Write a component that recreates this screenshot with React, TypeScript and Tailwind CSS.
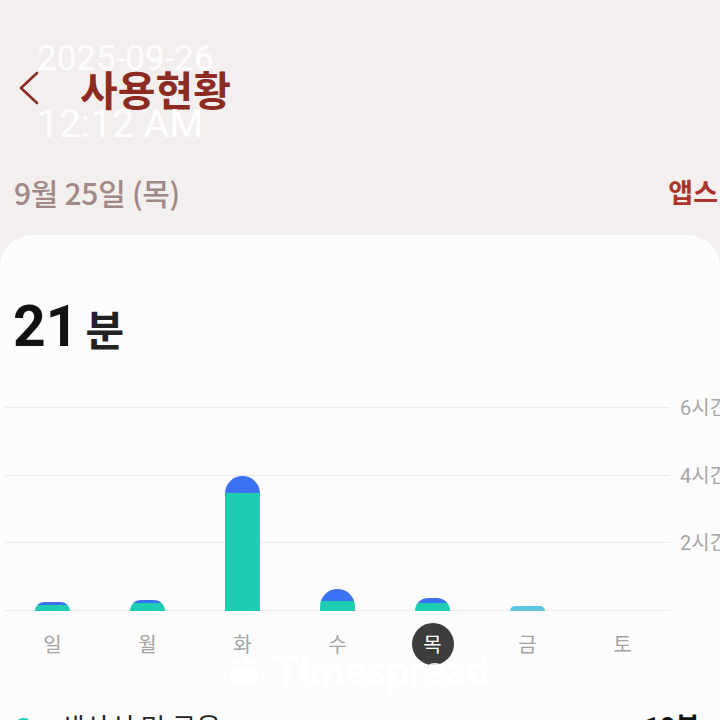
import React from 'react';

const bars = [
  { day: '일', blue: 3, teal: 6 },
  { day: '월', blue: 3, teal: 8 },
  { day: '화', blue: 17, teal: 118 },
  { day: '수', blue: 12, teal: 10 },
  { day: '목', blue: 5, teal: 8, selected: true },
  { day: '금', blue: 0, teal: 5, faint: true },
  { day: '토', blue: 0, teal: 0 },
];

const gridLabels = ['6시간', '4시간', '2시간', ''];

const kr = { fontFamily: '"Noto Sans CJK KR", "Noto Sans", sans-serif' };
const num = { fontFamily: 'Roboto, "Noto Sans CJK KR", sans-serif' };

export default function App() {
  return (
    <div className="relative w-[720px] h-[720px] overflow-hidden bg-[#f3efee]" style={kr}>
      {/* header */}
      <div className="flex items-center pl-[18px] pt-[64px] h-[112px]">
        <svg width="22" height="34" viewBox="0 0 22 34" fill="none">
          <path d="M19 2 L3 17 L19 32" stroke="#8c2b22" strokeWidth="2.6" strokeLinecap="round" strokeLinejoin="round" />
        </svg>
        <h1 className="ml-[40px] text-[41px] font-bold leading-none text-[#8c2b22]">사용현황</h1>
      </div>

      <div className="flex items-center justify-between pl-[14px] mt-[60px] h-[40px] whitespace-nowrap">
        <span className="text-[30px] font-medium text-[#a08886] tracking-[-0.3px]">9월 25일 (목)</span>
        <span className="text-[27px] font-bold text-[#a9352c] mr-[2px]">앱스</span>
      </div>

      {/* card */}
      <div className="mt-[23px] rounded-t-[32px] bg-[#fcfcfc] h-[600px]">
        <div className="flex items-baseline pl-[13px] pt-[63px]">
          <span className="text-[57px] font-bold leading-none text-[#111]" style={num}>21</span>
          <span className="ml-[7px] text-[42px] font-bold leading-none text-[#222]" style={kr}>분</span>
        </div>

        {/* chart */}
        <div className="relative mt-[52px] h-[204px] flex flex-col justify-between">
          {gridLabels.map((label, i) => (
            <div key={i} className="flex items-center h-px">
              <div className="ml-[5px] w-[665px] shrink-0 h-px bg-[#ebebeb]" />
              <span className="ml-[10px] shrink-0 text-[20px] leading-none text-[#a6a6a6] whitespace-nowrap" style={num}>
                {label.slice(0, 1)}
                <span style={kr}>{label.slice(1)}</span>
              </span>
            </div>
          ))}
          <div className="absolute left-[5px] top-0 w-[665px] h-[204px] grid grid-cols-7 items-end justify-items-center">
            {bars.map((b) => (
              <div
                key={b.day}
                className="w-[35px] overflow-hidden rounded-t-full flex flex-col"
                style={{ height: b.blue + b.teal }}
              >
                <div className="bg-[#3c71f4]" style={{ height: b.blue }} />
                <div className={b.faint ? 'flex-1 bg-[#5fc5dd]' : 'flex-1 bg-[#1ccdb4]'} />
              </div>
            ))}
          </div>
        </div>

        {/* days */}
        <div className="ml-[5px] w-[665px] grid grid-cols-7 mt-[12px]">
          {bars.map((b) => (
            <div key={b.day} className="flex justify-center">
              {b.selected ? (
                <div className="w-[42px] h-[42px] rounded-full bg-[#3d3d3d] flex items-center justify-center text-[20px] text-white">
                  {b.day}
                </div>
              ) : (
                <div className="h-[42px] flex items-center text-[20px] text-[#a3a3a3]">{b.day}</div>
              )}
            </div>
          ))}
        </div>

        {/* first category row */}
        <div className="flex items-center justify-between pl-[14px] pr-[20px] mt-[42px] h-[40px]">
          <div className="flex items-center">
            <span className="w-[19px] h-[19px] rounded-full bg-[#1ccdb4]" />
            <span className="ml-[27px] text-[27px] text-[#222]">생산성 및 금융</span>
          </div>
          <span className="text-[27px] font-bold text-[#111]">
            <span style={num}>10</span>분
          </span>
        </div>
      </div>

      {/* timestamp overlay */}
      <div className="absolute left-[37px] top-[41px] text-white/90 leading-none font-normal" style={num}>
        <div className="text-[35px]">2025-09-26</div>
        <div className="text-[39px] mt-[29px]">12:12 AM</div>
      </div>

      {/* watermark */}
      <div className="absolute left-[229px] top-[651px] flex items-center text-white/85">
        <svg width="30" height="30" viewBox="0 0 30 30" fill="currentColor">
          <rect x="1" y="1" width="10" height="6" rx="1" />
          <rect x="1" y="10" width="28" height="19" rx="1.5" />
          <rect x="14" y="1" width="15" height="6" rx="1" />
        </svg>
        <span className="ml-[15px] text-[41px] font-bold leading-none tracking-[-0.5px]" style={num}>Timespread</span>
      </div>
    </div>
  );
}
